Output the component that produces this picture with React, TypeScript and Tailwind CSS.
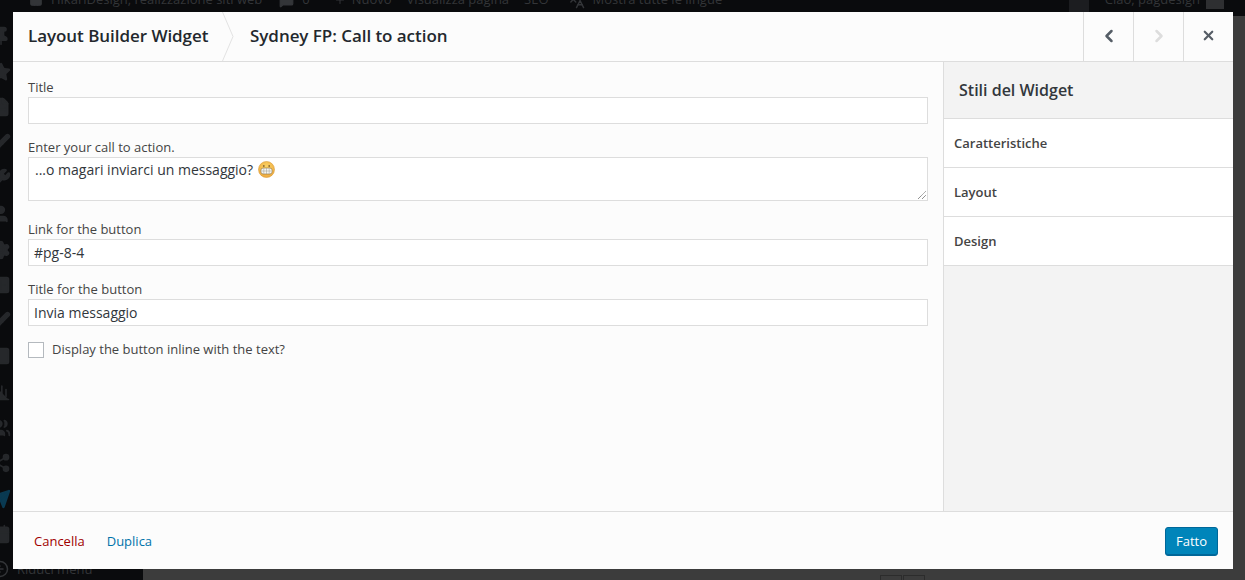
import React from 'react';
import { ChevronLeft, ChevronRight, X, Home, MessageSquare, Plus, Languages, Pin, Star, FileText, Brush, Wrench, Users, User, Settings, SquarePlus, Square, BarChart3, Share2, Send, Calendar, CircleArrowLeft } from 'lucide-react';

const FONT = "font-['Open_Sans',sans-serif]";

const fieldClass =
  'block w-full h-[27px] border border-[#dddddd] bg-white px-[5px] text-[14px] leading-[25px] text-[#32373c]';

const Field = ({ label, value }: { label: string; value?: string }) => (
  <div className="mb-[14px]">
    <label className="block text-[13px] leading-[18px] mb-[1px] text-[#444444]">{label}</label>
    <div className={fieldClass}>{value}</div>
  </div>
);

const sideItems = ['Caratteristiche', 'Layout', 'Design'];

const menuIcons = [Pin, Star, FileText, Brush, Wrench, User, Settings, SquarePlus, Brush, Square, BarChart3, Users, Share2, Send, Calendar];

const App = () => {
  return (
    <div className={`relative h-[580px] w-[1245px] overflow-hidden bg-[#3c3c3c] ${FONT}`}>
      {/* dimmed admin bar */}
      <div className="flex h-[32px] -mt-[16px] items-center bg-[#0a0b0d] pl-[29px] text-[13px] text-[#333538]">
        <Home size={14} className="mr-[8px]" fill="currentColor" />
        <span className="mr-[17px]">HikariDesign, realizzazione siti web</span>
        <MessageSquare size={15} className="mr-[8px]" fill="currentColor" />
        <span className="mr-[24px]">0</span>
        <Plus size={12} className="mr-[6px]" />
        <span className="mr-[15px]">Nuovo</span>
        <span className="mr-[15px]">Visualizza pagina</span>
        <span className="mr-[19px]">SEO</span>
        <Languages size={17} className="mr-[8px]" />
        <span>Mostra tutte le lingue</span>
        <div className="ml-auto flex items-center pr-[21px]">
          <div className="mr-[16px] h-[32px] w-[20px] bg-[#1c1d20]" />
          <span className="mr-[6px]">Ciao, pagdesign</span>
          <div className="h-[18px] w-[18px] bg-[#2e2f31]" />
        </div>
      </div>

      {/* dimmed side menu */}
      <div className="flex h-[564px] w-[143px] flex-col items-start gap-[15.6px] overflow-hidden bg-[#0a0b0d] pt-[10px] text-[#26282b]">
        {menuIcons.map((Icon, i) => (
          <Icon key={i} size={20} fill="currentColor" className={i === 13 ? '-ml-[9px] shrink-0 text-[#0a3a52]' : '-ml-[9px] shrink-0'} />
        ))}
        <div className="flex shrink-0 items-center text-[13px] leading-[14px] -ml-[9px] gap-[8px] text-[#333538]">
          <CircleArrowLeft size={18} />
          <span>Riduci menu</span>
        </div>
      </div>

      {/* bits of the page under the overlay */}
      <div className="absolute left-[880px] top-[575px] flex gap-[1px]">
        <div className="h-[8px] w-[22px] border border-[#2c2c2c]" />
        <div className="h-[8px] w-[22px] border border-[#2c2c2c]" />
      </div>

      {/* modal */}
      <div className="absolute left-[13px] top-[12px] flex h-[557px] w-[1220px] flex-col bg-white">
        <div className="flex h-[50px] shrink-0 items-stretch border-b border-[#dddddd] bg-[#fcfcfc]">
          <div className="relative flex w-[221px] items-center pb-[2px] pl-[15px] text-[17px] tracking-[-0.05px] font-semibold text-[#23282d]">
            Layout Builder Widget
            <svg className="absolute right-0 top-0" width="12" height="49" viewBox="0 0 12 49" fill="none">
              <path d="M0.5 0 L11 24.5 L0.5 49" stroke="#e2e2e2" />
            </svg>
          </div>
          <div className="flex flex-1 items-center pb-[2px] pl-[16px] text-[17px] tracking-[-0.05px] font-semibold text-[#23282d]">
            Sydney FP: Call to action
          </div>
          <div className="flex w-[50px] items-center justify-center border-l border-[#dddddd] pb-[2px] text-[#555d66]">
            <ChevronLeft size={20} strokeWidth={3} />
          </div>
          <div className="flex w-[50px] items-center justify-center border-l border-[#dddddd] pb-[2px] text-[#dddddd]">
            <ChevronRight size={20} strokeWidth={3} />
          </div>
          <div className="flex w-[50px] items-center justify-center border-l border-[#dddddd] pb-[2px] text-[#555d66]">
            <X size={15} strokeWidth={3.5} />
          </div>
        </div>

        <div className="flex min-h-0 flex-1">
          <div className="flex-1 bg-[#fcfcfc] px-[15px] pt-[16px]">
            <Field label="Title" />
            <div className="mb-[19px]">
              <label className="block text-[13px] leading-[18px] mb-[1px] text-[#444444]">Enter your call to action.</label>
              <div className="relative h-[44px] border border-[#dddddd] bg-white px-[6px] pt-[1px] text-[14px] leading-[22px] text-[#32373c]">
                <span className="inline-flex items-center">
                  ...o magari inviarci un messaggio?
                  <svg className="ml-[5px] -mt-[2px]" width="17" height="17" viewBox="0 0 17 17">
                    <defs>
                      <radialGradient id="face" cx="50%" cy="35%" r="65%">
                        <stop offset="0%" stopColor="#fbd568" />
                        <stop offset="100%" stopColor="#eeaa3e" />
                      </radialGradient>
                    </defs>
                    <circle cx="8.5" cy="8.5" r="8" fill="url(#face)" stroke="#d99a35" strokeWidth="0.6" />
                    <circle cx="5.8" cy="5" r="0.9" fill="#8a6a35" />
                    <circle cx="11.2" cy="5" r="0.9" fill="#8a6a35" />
                    <rect x="2.8" y="7" width="11.4" height="6" rx="2.5" fill="#f5f5f0" stroke="#8a6a35" strokeWidth="0.6" />
                    <path d="M3 10H14M5.8 7V13M8.5 7V13M11.2 7V13" stroke="#9a9a90" strokeWidth="0.5" />
                  </svg>
                </span>
                <svg className="absolute bottom-[1px] right-[1px]" width="9" height="9" viewBox="0 0 9 9">
                  <path d="M1 9 L9 1 M5 9 L9 5" stroke="#666666" strokeWidth="1" strokeDasharray="1 0.6" />
                </svg>
              </div>
            </div>
            <Field label="Link for the button" value="#pg-8-4" />
            <Field label="Title for the button" value="Invia messaggio" />
            <div className="mt-[15px] flex items-center text-[13px] text-[#444444]">
              <div className="mr-[8px] h-[16px] w-[16px] border border-[#b4b9be] bg-white" />
              <span className="h-[18px] leading-[16px]">Display the button inline with the text?</span>
            </div>
          </div>

          <div className="flex w-[290px] shrink-0 flex-col border-l border-[#dddddd] bg-[#f3f3f3]">
            <div className="flex h-[57px] items-center border-b border-[#dddddd] pl-[15px] text-[16px] font-semibold text-[#32373c]">
              Stili del Widget
            </div>
            {sideItems.map((item) => (
              <div
                key={item}
                className="flex h-[49px] items-center border-b border-[#dddddd] bg-white pl-[10px] pt-[2px] text-[13px] font-semibold text-[#444444]"
              >
                {item}
              </div>
            ))}
          </div>
        </div>

        <div className="flex h-[58px] shrink-0 items-center border-t border-[#dddddd] bg-[#fcfcfc] pl-[21px] pr-[15px] pt-[2px] text-[13px]">
          <a className="mr-[22px] text-[#a00000]">Cancella</a>
          <a className="text-[#0073aa]">Duplica</a>
          <button className="ml-auto h-[29px] w-[53px] rounded-[3px] border border-[#006799] bg-[#0085ba] text-[13px] font-medium text-white shadow-[inset_0_-1px_0_#006799]">
            Fatto
          </button>
        </div>
      </div>
    </div>
  );
};

export default App;
